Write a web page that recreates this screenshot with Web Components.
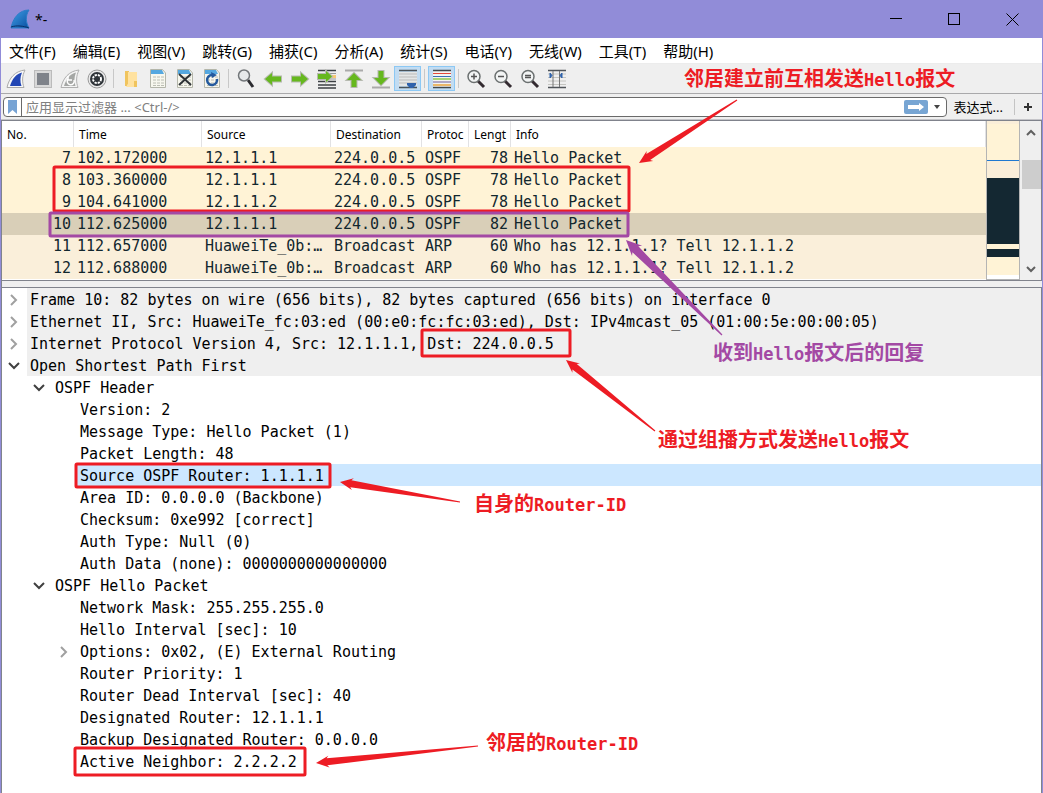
<!DOCTYPE html>
<html lang="zh-CN">
<head>
<meta charset="utf-8">
<title>*-</title>
<style>
  html, body { margin: 0; }
  body { font-family: "Noto Sans", "Noto Sans CJK SC", sans-serif; color: #000; background: #fff; overflow-x: hidden; }
</style>
</head>
<body>
<capture-window></capture-window>

<script>
const define = (name, html, setup) => {
  const template = document.createElement('template');
  template.innerHTML = html;
  customElements.define(name, class extends HTMLElement {
    constructor() {
      super();
      this.attachShadow({ mode: 'open' }).append(template.content.cloneNode(true));
    }
    connectedCallback() { if (setup) setup(this, this.shadowRoot); }
  });
};

const buttonReset = 'button{font:inherit;color:inherit;background:none;border:0;padding:0;margin:0;display:block}';

/* ---------- title bar ---------- */
define('title-bar', `
<style>
  :host { display: flex; align-items: center; height: 38px; padding-right: 1px; background: #918cd8; }
  ${buttonReset}
  .logo { margin: 0 5px 0 9px; }
  h1 { font-size: 14px; font-weight: 400; margin: 0; flex: 1; }
  button { width: 58px; height: 38px; display: grid; place-items: center; }
  svg { display: block; fill: none; stroke: #000; }
</style>
<svg class="logo" width="20" height="20" stroke="none">
  <defs><linearGradient id="g" x1="0" y1="0" x2="1" y2="1"><stop offset="0" stop-color="#3fa0e8"/><stop offset="1" stop-color="#0b4fa0"/></linearGradient></defs>
  <path d="M1 19C3 9 9 1 19 1C15 7 16 14 19 19Z" fill="url(#g)" stroke="#2b7cc8"/>
  <path d="M1 18C7 16 13 17 19 19" stroke="#0a2f66"/>
</svg>
<h1>*-</h1>
<button aria-label="最小化"><svg width="12" height="12"><path d="M0 5.5H12"/></svg></button>
<button aria-label="最大化"><svg width="12" height="12"><rect x=".5" y=".5" width="11" height="11"/></svg></button>
<button aria-label="关闭"><svg width="13" height="13"><path d="M.5 .5L12.5 12.5M12.5 .5L.5 12.5"/></svg></button>
`);

/* ---------- menu bar ---------- */
define('menu-bar', `
<style>
  :host { display: flex; align-items: center; gap: 17px; height: 25px; padding: 0 8px; background: #fff; border-bottom: 1px solid #ececec; font-size: 15px; line-height: 24px; }
  ${buttonReset}
  button { white-space: nowrap; }
</style>`, (el, root) => {
  for (const t of ['文件(F)', '编辑(E)', '视图(V)', '跳转(G)', '捕获(C)', '分析(A)', '统计(S)', '电话(Y)', '无线(W)', '工具(T)', '帮助(H)']) {
    const b = document.createElement('button');
    b.textContent = t;
    root.append(b);
  }
});

/* ---------- toolbar ---------- */
const page = '<path d="M2.5 .5H14.5L17.5 4V18.5H2.5Z" fill="#f7f7ee" stroke="#b4b6aa"/><path d="M3 1H14L16 5H3Z" fill="#55a8e0"/><path d="M5 8H16M5 11H16M5 14H16M5 16.5H16" stroke="#bcbeb4" stroke-dasharray="3 1"/>';
const lens = inner => `<path d="M12 12L18 18" stroke="#332a30" stroke-width="3"/><circle cx="8" cy="7.5" r="6" fill="#f2f4f4" stroke="#6b7070" stroke-width="1.5"/>${inner}`;
const arrow = 'fill="#66b81e" stroke="#b6bab0" stroke-width="2" paint-order="stroke"';
const icons = {
  '开始捕获': '<path d="M1 18.5C3 9 9 2 19 1C16 7 16 13 18 18.5Z" fill="#f8f8f8" stroke="#aaa"/><path d="M4 17C6 10 10 5 16 3.5C14 8 14 13 15.5 17Z" fill="#2347b5"/>',
  '停止捕获': '<rect x="1.5" y="1.5" width="17" height="17" fill="#d9d9d9" stroke="#bbb"/><rect x="4" y="4" width="12" height="12" fill="#7f838a"/>',
  '重新捕获': '<path d="M1 18.5C3 9 9 2 19 1C16 7 16 13 18 18.5Z" fill="#f4f4f4" stroke="#b0b0b0"/><path d="M4 17C6 10 10 5 16 3.5C14 8 14 13 15.5 17Z" fill="#a5a7a5"/><path d="M8 10a3.5 3.5 0 1 0 6 1M8 7v4h4" fill="none" stroke="#fff" stroke-width="1.5"/>',
  '捕获选项': '<circle cx="10" cy="10" r="9" fill="#e9e9e9" stroke="#999"/><circle cx="10" cy="10" r="7" fill="#2e3338"/><circle cx="10" cy="10" r="4" fill="none" stroke="#fff" stroke-width="2" stroke-dasharray="2.2 1"/><circle cx="10" cy="10" r="2.5" fill="#2e3338"/>',
  'sep1': '',
  '打开': '<path d="M4 2H8V13L6 17H4Z" fill="#f0c45e"/><path d="M7 3H16V18H5L7 15Z" fill="#ffe2a0"/><path d="M13 12H16V18H13Z" fill="#f0c45e"/>',
  '保存': page,
  '关闭文件': page + '<path d="M4 5L16 16M16 5L4 16" stroke="#2d3236" stroke-width="2"/>',
  '重新加载': page + '<path d="M10 6a5 5 0 1 0 5 4" fill="none" stroke="#245a9e" stroke-width="2.5"/><path d="M9 3L15 6L10 9Z" fill="#245a9e"/>',
  'sep2': '',
  '查找': '<path d="M12 11L17 18" stroke="#2c2c30" stroke-width="3"/><circle cx="8" cy="6.5" r="5.5" fill="#e6e9ea" stroke="#73777a" stroke-width="1.5"/>',
  '后退': `<path d="M2 10L9 4V7.5H18V12.5H9V16Z" ${arrow}/>`,
  '前进': `<path d="M18 10L11 4V7.5H2V12.5H11V16Z" ${arrow}/>`,
  '转到': `<path d="M1 1.5H19M1 12.5H19M1 16H19M1 19H19" stroke="#3c4044" stroke-width="1.5"/><path d="M12 4.5H19M12 10H19" stroke="#999"/><path d="M14 6H19V9H14Z" fill="#f9c873"/><path d="M15 7.5L9 2V5H1V10H9V13Z" ${arrow}/>`,
  '首个分组': `<path d="M1 1.5H19" stroke="#aaa" stroke-width="2"/><path d="M10 4L3 11H7.5V18H12.5V11H17Z" ${arrow}/>`,
  '最后分组': `<path d="M1 18.5H19" stroke="#aaa" stroke-width="2"/><path d="M10 16L3 9H7.5V2H12.5V9H17Z" ${arrow}/>`,
  '自动滚动': '<path d="M1 3H19V17H1Z" fill="#e4e6e6"/><path d="M1 1.5H19M1 18.5H19" stroke="#4a5258" stroke-width="1.5"/><path d="M1 5H19M1 8H19M1 11H19M1 14H19" stroke="#bbb"/><path d="M9 14H18V16L15 19H12L9 16Z" fill="#2f62ac"/>',
  'sep3': '',
  '着色': '<path d="M1 1H19V19H1Z" fill="#f4f4f0"/><path d="M1 1.5H19M1 18.5H19" stroke="#43494c" stroke-width="1.5"/><path d="M1 4.5H19" stroke="#e3493a"/><path d="M1 7.5H19" stroke="#3a6fb5"/><path d="M1 10H19" stroke="#8cc84b" stroke-width="1.5"/><path d="M1 13H19" stroke="#6b5a9b"/><path d="M1 16H19" stroke="#e8a33d" stroke-width="1.5"/>',
  'sep4': '',
  '放大': lens('<path d="M5 7.5H11M8 4.5V10.5" stroke="#555" stroke-width="1.5"/>'),
  '缩小': lens('<path d="M5 7.5H11" stroke="#555" stroke-width="1.5"/>'),
  '普通大小': lens('<path d="M5 6.5H11M5 8.5H11" stroke="#555" stroke-width="1.5"/>'),
  '调整列宽': '<path d="M1 5H19M1 8.5H19M1 12H19M1 15.5H19" stroke="#c4c4c0"/><path d="M1 1.5H19M1 18.5H19" stroke="#50555a" stroke-width="1.5"/><path d="M6 2V18M12.5 2V18" stroke="#777"/><path d="M3 4L5 6.5L3 9ZM15 4L13 6.5L15 9Z" fill="#2f62ac" stroke="#2f62ac"/>'
};
define('tool-bar', `
<style>
  :host { display: flex; align-items: center; height: 29px; padding-left: 1px; background: #efefef; border-bottom: 1px solid #a9a9ab; }
  ${buttonReset}
  button { width: 27px; height: 25px; display: grid; place-items: center; box-sizing: border-box; }
  button[aria-pressed] { background: #c2dcf2; border: 1px solid #8cc8f4; }
  i { width: 7px; height: 19px; background: linear-gradient(#c8c8c8, #c8c8c8) center / 1px 100% no-repeat; }
  svg { display: block; }
</style>`, (el, root) => {
  for (const [name, art] of Object.entries(icons)) {
    if (name.startsWith('sep')) { root.append(document.createElement('i')); continue; }
    const b = document.createElement('button');
    b.setAttribute('aria-label', name);
    if (name === '自动滚动' || name === '着色') b.setAttribute('aria-pressed', 'true');
    b.innerHTML = `<svg width="20" height="20" viewBox="0 0 20 20">${art}</svg>`;
    root.append(b);
  }
});

/* ---------- display filter ---------- */
define('filter-bar', `
<style>
  :host { display: flex; align-items: center; height: 25px; padding: 0 2px; background: #efefef; border-bottom: 1px solid #c4c4c8; font-size: 13px; }
  ${buttonReset}
  .box { flex: 1; display: flex; align-items: center; height: 18px; background: #fff; border: 1px solid #6a6a6a; border-radius: 4px; }
  .mark { width: 18px; height: 18px; border-right: 1px solid #6a6a6a; display: grid; place-items: center; }
  input { flex: 1; min-width: 0; height: 18px; border: 0; padding: 0 4px; background: none; outline: 0; font: inherit; color: #000; }
  input::placeholder { color: #808080; opacity: 1; }
  .apply { width: 24px; height: 14px; border-radius: 2px; background: #77a5d3; }
  .drop { width: 18px; height: 18px; display: grid; place-items: center; }
  .expr { margin-left: 7px; }
  .plus { width: 26px; height: 16px; margin-left: 11px; border-left: 1px solid #c4c4c4; display: grid; place-items: center; }
  svg { display: block; }
</style>
<div class="box">
  <button class="mark" aria-label="书签"><svg width="9" height="14"><path d="M0 0H9V14L4.5 10L0 14Z" fill="#77a3d4"/></svg></button>
  <input aria-label="显示过滤器" placeholder="应用显示过滤器 ... &lt;Ctrl-/&gt;">
  <button class="apply" aria-label="应用"><svg width="24" height="14"><path d="M4 5H15V3L20 7L15 11V9H4Z" fill="#fff"/></svg></button>
  <button class="drop" aria-label="历史"><svg width="6" height="4"><path d="M0 0H6L3 4Z" fill="#444"/></svg></button>
</div>
<button class="expr">表达式...</button>
<button class="plus" aria-label="添加"><svg width="8" height="8"><path d="M0 4H8M4 0V8" stroke="#333" stroke-width="2"/></svg></button>
`);

/* ---------- packet list ---------- */
const packets = [
  ['7', '102.172000', '12.1.1.1', '224.0.0.5', 'OSPF', '78', 'Hello Packet', 'ospf'],
  ['8', '103.360000', '12.1.1.1', '224.0.0.5', 'OSPF', '78', 'Hello Packet', 'ospf'],
  ['9', '104.641000', '12.1.1.2', '224.0.0.5', 'OSPF', '78', 'Hello Packet', 'ospf'],
  ['10', '112.625000', '12.1.1.1', '224.0.0.5', 'OSPF', '82', 'Hello Packet', 'current'],
  ['11', '112.657000', 'HuaweiTe_0b:…', 'Broadcast', 'ARP', '60', 'Who has 12.1.1.1? Tell 12.1.1.2', 'arp'],
  ['12', '112.688000', 'HuaweiTe_0b:…', 'Broadcast', 'ARP', '60', 'Who has 12.1.1.1? Tell 12.1.1.2', 'arp']
];
define('packet-list', `
<style>
  :host { display: flex; height: 159px; border: solid #80838c; border-width: 1px 1px 1px 0; background: #fff; }
  .view { flex: 1; min-width: 0; overflow: hidden; }
  table { width: 100%; table-layout: fixed; border-collapse: separate; border-spacing: 0; }
  th { height: 26px; box-sizing: border-box; padding: 0 5px; border-right: 1px solid #e2e2e4; font-size: 12px; font-weight: 400; text-align: left; background: #fff; white-space: nowrap; }
  td { height: 22px; padding: 0 3px; font: 15px/22px "DejaVu Sans Mono", monospace; color: #12272e; white-space: nowrap; overflow: hidden; }
  td:nth-child(1), td:nth-child(6) { text-align: right; }
  .ospf { background: #fff3d6; } .current { background: #d9cfb8; } .arp { background: #faefda; }
  .map { width: 32px; border: solid #b4b4b4; border-width: 0 1px 1px; display: flex; flex-direction: column; }
  .bar { width: 20px; padding-left: 1px; background: #efefef; display: flex; flex-direction: column; align-items: center; }
  .bar span { height: 39px; width: 100%; display: grid; place-items: center; box-sizing: border-box; padding-bottom: 16px; }
  .thumb { height: 29px; width: 19px; background: #cdcdcd; }
  .bar span.down { margin-top: auto; height: 22px; padding: 0; }
  svg { display: block; fill: none; stroke: #606060; stroke-width: 2; }
</style>
<div class="view"><table>
  <colgroup><col style="width:72px"><col style="width:128px"><col style="width:129px"><col style="width:91px"><col style="width:47px"><col style="width:42px"><col></colgroup>
  <thead><tr><th>No.</th><th>Time</th><th>Source</th><th>Destination</th><th>Protoc</th><th>Lengt</th><th>Info</th></tr></thead>
  <tbody></tbody>
</table></div>
<div class="map"></div>
<div class="bar"><span><svg width="10" height="7"><path d="M1 6L5 2L9 6"/></svg></span><div class="thumb"></div><span class="down"><svg width="10" height="7"><path d="M1 1L5 5L9 1"/></svg></span></div>
`, (el, root) => {
  const body = root.querySelector('tbody');
  for (const p of packets) {
    const tr = body.insertRow();
    tr.className = p[7];
    p.slice(0, 7).forEach(t => { tr.insertCell().textContent = t; });
  }
  const bands = [['#faeed9', 3], ['#fff3d6', 36], ['#1f78d1', 1], ['#faeed9', 17], ['#142832', 66], ['#fff3d6', 5], ['#142832', 8], ['#fff3d6', 18]];
  root.querySelector('.map').innerHTML = bands.map(([c, h]) => `<div style="background:${c};height:${h}px"></div>`).join('');
});

/* ---------- detail tree ---------- */
define('tree-row', `
<style>
  :host { display: flex; height: 22px; padding-left: calc(var(--level, 0) * 25px); font: 15px/24px "DejaVu Sans Mono", monospace; white-space: pre; }
  ${buttonReset}
  .lead { width: 25px; flex: none; }
  .text { flex: 1; padding-left: 3px; }
  :host([shade]) .text { background: #efefef; }
  :host([selected]) .text { background: #cce7ff; }
  button { width: 24px; height: 24px; display: grid; place-items: center; }
  svg { display: block; fill: none; stroke: #a0a0a0; stroke-width: 2; }
  svg.open { stroke: #404040; }
</style>
<div class="lead"></div><div class="text"><slot></slot></div>
`, (el, root) => {
  el.style.setProperty('--level', el.getAttribute('level'));
  const state = el.getAttribute('state');
  if (state) root.querySelector('.lead').innerHTML = state === 'open'
    ? '<button aria-label="折叠"><svg class="open" width="12" height="8"><path d="M1 1L6 6L11 1"/></svg></button>'
    : '<button aria-label="展开"><svg width="8" height="12"><path d="M1 1L6 6L1 11"/></svg></button>';
});

define('packet-details', `
<style>:host { display: block; flex: 1; padding-bottom: 19px; background: #fff; border: solid #80838c; border-width: 1px 1px 0 0; }</style>
<tree-row level="0" state="closed" shade>Frame 10: 82 bytes on wire (656 bits), 82 bytes captured (656 bits) on interface 0</tree-row>
<tree-row level="0" state="closed" shade>Ethernet II, Src: HuaweiTe_fc:03:ed (00:e0:fc:fc:03:ed), Dst: IPv4mcast_05 (01:00:5e:00:00:05)</tree-row>
<tree-row level="0" state="closed" shade>Internet Protocol Version 4, Src: 12.1.1.1, Dst: 224.0.0.5</tree-row>
<tree-row level="0" state="open" shade>Open Shortest Path First</tree-row>
<tree-row level="1" state="open">OSPF Header</tree-row>
<tree-row level="2">Version: 2</tree-row>
<tree-row level="2">Message Type: Hello Packet (1)</tree-row>
<tree-row level="2">Packet Length: 48</tree-row>
<tree-row level="2" selected>Source OSPF Router: 1.1.1.1</tree-row>
<tree-row level="2">Area ID: 0.0.0.0 (Backbone)</tree-row>
<tree-row level="2">Checksum: 0xe992 [correct]</tree-row>
<tree-row level="2">Auth Type: Null (0)</tree-row>
<tree-row level="2">Auth Data (none): 0000000000000000</tree-row>
<tree-row level="1" state="open">OSPF Hello Packet</tree-row>
<tree-row level="2">Network Mask: 255.255.255.0</tree-row>
<tree-row level="2">Hello Interval [sec]: 10</tree-row>
<tree-row level="2" state="closed">Options: 0x02, (E) External Routing</tree-row>
<tree-row level="2">Router Priority: 1</tree-row>
<tree-row level="2">Router Dead Interval [sec]: 40</tree-row>
<tree-row level="2">Designated Router: 12.1.1.1</tree-row>
<tree-row level="2">Backup Designated Router: 0.0.0.0</tree-row>
<tree-row level="2">Active Neighbor: 2.2.2.2</tree-row>
`);

/* ---------- hand-drawn notes laid over the window ---------- */
const RED = '#ed1c24', PURPLE = '#a349a4';
const notes = {
  boxes: [[54, 167, 575, 44, RED], [50, 213, 578, 23, PURPLE], [422, 330, 148, 26, RED], [76, 464, 254, 23, RED], [75, 748, 230, 27, RED]],
  arrows: [[639, 163, 737, 100, RED, 1], [340, 482, 460, 502, RED, 1], [566, 360, 655, 431, RED, 1], [316, 763, 478, 746, RED, 1], [626, 240, 722, 335, PURPLE, 1.2]],
  labels: [[684, 66, '邻居建立前互相发送<b>Hello</b>报文', RED], [713, 340, '收到<b>Hello</b>报文后的回复', PURPLE], [658, 427, '通过组播方式发送<b>Hello</b>报文', RED], [474, 491, '自身的<b>Router-ID</b>', RED], [486, 730, '邻居的<b>Router-ID</b>', RED]]
};
define('note-layer', `
<style>
  :host { position: absolute; inset: 0; pointer-events: none; }
  svg { position: absolute; width: 100%; height: 100%; }
  span { position: absolute; font: 700 20px/24px "Noto Sans CJK SC", sans-serif; white-space: nowrap; }
  b { font: 700 17px/24px "DejaVu Sans Mono", monospace; }
</style>
<svg></svg>`, (el, root) => {
  const arrowPath = ([x, y, tx, ty, color, k]) => {
    const len = Math.hypot(tx - x, ty - y), ux = (tx - x) / len, uy = (ty - y) / len;
    const at = (d, s) => `${x + ux * d - uy * s},${y + uy * d + ux * s}`;
    return `<polygon fill="${color}" points="${[at(0, 0), at(13 * k, 6 * k), at(11 * k, 3.5 * k), at(len, .6), at(len, -.6), at(11 * k, -3.5 * k), at(13 * k, -6 * k)].join(' ')}"/>`;
  };
  root.querySelector('svg').innerHTML =
    notes.boxes.map(([x, y, w, h, c]) => `<rect x="${x}" y="${y}" width="${w}" height="${h}" rx="1" fill="none" stroke="${c}" stroke-width="3"/>`).join('') +
    notes.arrows.map(arrowPath).join('');
  for (const [x, y, html, color] of notes.labels) {
    const s = document.createElement('span');
    s.style.cssText = `left:${x}px;top:${y}px;color:${color}`;
    s.innerHTML = html;
    root.append(s);
  }
});

define('capture-window', `
<style>
  :host { position: relative; display: flex; flex-direction: column; min-height: 100vh; box-sizing: border-box; background: #efefef; border: solid #918cd8; border-width: 0 1px; }
  .panes { flex: 1; display: flex; flex-direction: column; gap: 6px; border-left: 1px solid #80838c; }
  note-layer { left: -1px; right: -1px; }
</style>
<title-bar></title-bar>
<menu-bar></menu-bar>
<tool-bar></tool-bar>
<filter-bar></filter-bar>
<div class="panes">
  <packet-list></packet-list>
  <packet-details></packet-details>
</div>
<note-layer></note-layer>
`);
</script>
</body>
</html>
